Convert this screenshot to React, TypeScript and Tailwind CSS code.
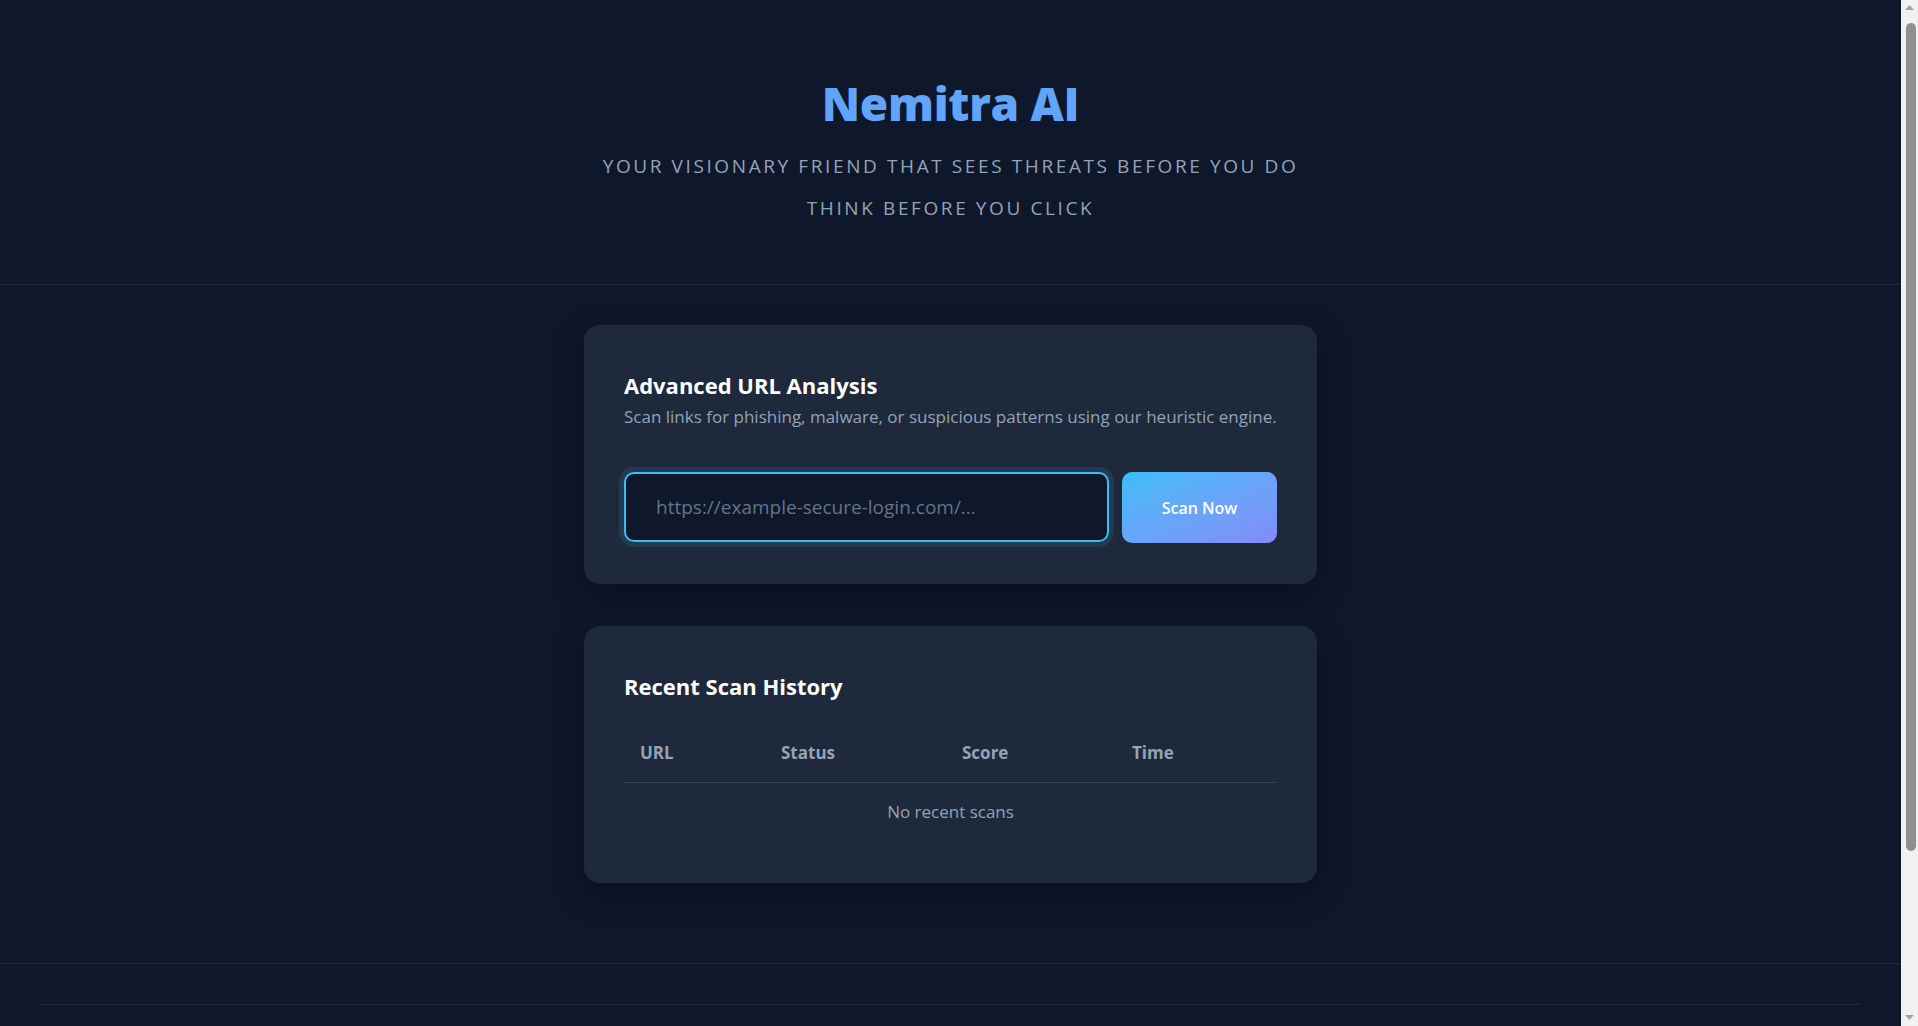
import { useState } from "react";

const columns = [
  { label: "URL", width: "w-[141px]" },
  { label: "Status", width: "w-[181px]" },
  { label: "Score", width: "w-[170px]" },
  { label: "Time", width: "w-[161px]" },
];

function ScrollTrack() {
  return (
    <div className="flex w-[17px] shrink-0 flex-col items-center bg-[#f1f1f1]">
      <svg width="9" height="6" viewBox="0 0 9 6" className="mt-[5px]">
        <path d="M4.5 0L9 5H0z" fill="#a3a3a3" />
      </svg>
      <div className="mt-[12px] ml-[2px] h-[828px] w-[10px] rounded-full bg-[#8f8f8f]" />
      <div className="flex-1" />
      <svg width="9" height="6" viewBox="0 0 9 6" className="mb-[5px]">
        <path d="M0 0H9L4.5 5z" fill="#a3a3a3" />
      </svg>
    </div>
  );
}

export default function App() {
  const [url, setUrl] = useState("");

  return (
    <div className="flex h-screen bg-[#0f172a] font-['Open_Sans',sans-serif] text-[#f1f5f9]">
      <div className="flex-1 overflow-y-auto">
        <header className="border-b border-[#1e293b] pt-[72px] pb-[55px] text-center">
          <h1 className="text-[46px] font-extrabold leading-[62px] tracking-[-0.3px] text-[#60a5fa]">
            Nemitra AI
          </h1>
          <p className="mt-[11px] text-[19px] uppercase leading-[42px] tracking-[2.6px] text-[#94a3b8]">
            Your visionary friend that sees threats before you do
          </p>
          <p className="text-[19px] uppercase leading-[42px] tracking-[2.6px] text-[#94a3b8]">
            Think before you click
          </p>
        </header>

        <main className="pt-10 pb-[80px]">
          <section className="mx-auto w-[733px] rounded-2xl bg-[#1e293b] p-10 pb-[41px] shadow-[0_10px_30px_rgba(0,0,0,0.35)]">
            <h2 className="text-[22px] font-bold leading-[40px] text-white">
              Advanced URL Analysis
            </h2>
            <p className="text-[17px] leading-6 text-[#94a3b8]">
              Scan links for phishing, malware, or suspicious patterns using our heuristic engine.
            </p>
            <div className="mt-[43px] flex gap-[13px]">
              <input
                value={url}
                onChange={(e) => setUrl(e.target.value)}
                placeholder="https://example-secure-login.com/..."
                className="h-[70px] flex-1 rounded-[10px] border-2 border-[#38bdf8] bg-[#0f172a] px-[30px] text-[19px] text-white outline-none shadow-[0_0_0_5px_rgba(56,189,248,0.12)] placeholder:text-[#64748b]"
              />
              <button className="h-[71px] w-[155px] rounded-[10px] bg-gradient-to-br from-[#38bdf8] to-[#818cf8] text-[16px] font-semibold text-white">
                Scan Now
              </button>
            </div>
          </section>

          <section className="mx-auto mt-[42px] w-[733px] rounded-2xl bg-[#1e293b] p-10 shadow-[0_10px_30px_rgba(0,0,0,0.35)]">
            <h2 className="text-[22px] font-bold leading-[40px] text-white">
              Recent Scan History
            </h2>
            <table className="mt-[18px] w-full border-collapse text-[17px]">
              <thead>
                <tr className="border-b border-[#334155]">
                  {columns.map((c) => (
                    <th
                      key={c.label}
                      className={`${c.width} px-4 py-[17px] text-left font-bold leading-6 text-[#94a3b8]`}
                    >
                      {c.label}
                    </th>
                  ))}
                </tr>
              </thead>
              <tbody>
                <tr>
                  <td colSpan={4} className="pt-[17px] pb-[19px] text-center leading-6 text-[#94a3b8]">
                    No recent scans
                  </td>
                </tr>
              </tbody>
            </table>
          </section>
        </main>

        <footer className="border-t border-[#1e293b] px-10 pt-10">
          <div className="h-[225px] border-t border-[#1e293b]" />
        </footer>
      </div>
      <ScrollTrack />
    </div>
  );
}
